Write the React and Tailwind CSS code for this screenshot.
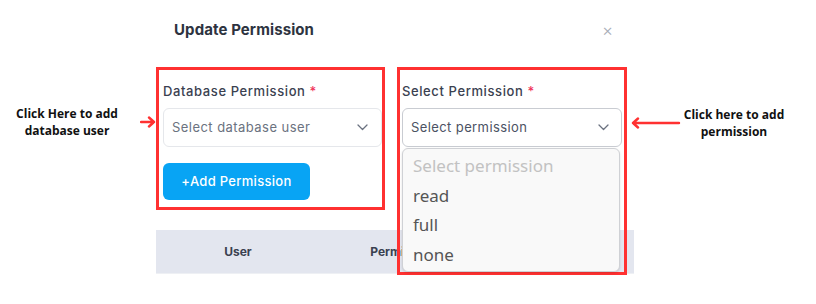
import React from 'react';

const ui = { fontFamily: 'Inter, "Noto Sans", sans-serif' };
const note = { fontFamily: '"Open Sans", "Noto Sans", sans-serif' };
const list = { fontFamily: '"Noto Sans", "DejaVu Sans", sans-serif' };

const Chevron = () => (
  <svg width="11" height="7" viewBox="0 0 11 7" fill="none" stroke="#6b7280" strokeWidth="1.3" strokeLinecap="round" strokeLinejoin="round">
    <path d="M1 1l4.5 4.5L10 1" />
  </svg>
);

const options = ['read', 'full', 'none'];

export default function App() {
  return (
    <div className="w-[816px] h-[304px] bg-white flex overflow-hidden">
      {/* left note */}
      <div className="w-[156px] pt-[105px]">
        <div className="flex items-center">
          <p className="w-[134px] text-center text-[12px] leading-[17px] font-bold text-[#111]" style={note}>
            Click Here to add
            <br />
            database user
          </p>
          <svg width="16" height="12" viewBox="0 0 16 12" className="ml-[6px]">
            <path d="M1 6h13M9 1.5L14 6l-5 4.5" fill="none" stroke="#ff3131" strokeWidth="2.4" strokeLinecap="round" strokeLinejoin="round" />
          </svg>
        </div>
      </div>

      {/* modal */}
      <div className="w-[478px] flex flex-col" style={ui}>
        <div className="flex items-center justify-between pt-[20px] pl-[18px] pr-[21px] h-[40px]">
          <h3 className="text-[15px] font-bold text-[#2d3340] leading-[20px] tracking-[0.1px]">Update Permission</h3>
          <span className="text-[#a8adb7] text-[17px] leading-none font-light">×</span>
        </div>

        <div className="flex items-start gap-[12px] mt-[27px] h-[143px]">
          {/* database user */}
          <div className="w-[229px] border-[3px] border-[#ff3131] pl-[4px] pt-[12px] pb-[7px]">
            <label className="block text-[13px] leading-[18px] font-medium tracking-[0.6px] text-[#3a4150] mb-[8px]">
              Database Permission <span className="text-[#f0355b]">*</span>
            </label>
            <div className="h-[39px] flex items-center justify-between rounded-md border border-[#e5e7eb] pl-[8px] pr-[13px]">
              <span className="text-[13px] tracking-[0.45px] text-[#6b7280]">Select database user</span>
              <Chevron />
            </div>
            <button className="mt-[16px] h-[37px] w-[147px] rounded-md bg-[#08a4f4] text-white text-[13px] font-medium tracking-[0.3px]">
              +Add Permission
            </button>
          </div>

          {/* permission */}
          <div className="relative z-10 w-[230px] border-[3px] border-[#ff3131] px-[2px] pt-[12px] pb-[0px]">
            <label className="block text-[13px] leading-[18px] font-medium tracking-[0.6px] text-[#3a4150] mb-[8px]">
              Select Permission <span className="text-[#f0355b]">*</span>
            </label>
            <div className="h-[39px] flex items-center justify-between rounded-md border border-[#c9ccd2] bg-white pl-[8px] pr-[12px]">
              <span className="text-[13px] tracking-[0.4px] text-[#4b5263]">Select permission</span>
              <Chevron />
            </div>
            <div className="mt-[1px] w-[218px] rounded-md border border-[#cfd1d5] bg-[#f9f9f9] py-[2px] pl-[10px] shadow-sm" style={list}>
              <div className="text-[17px] leading-[29.5px] text-[#c2c2c2]">Select permission</div>
              {options.map((o) => (
                <div key={o} className="text-[17px] leading-[29.5px] text-[#555]">
                  {o}
                </div>
              ))}
            </div>
          </div>
        </div>

        <div className="mt-[20px] h-[44px] bg-[#e3e6ef] border-b border-[#eef0f4] grid grid-cols-[164px_166px_1fr] items-center text-[12px] font-bold text-[#3a4150]">
          <div className="text-center">User</div>
          <div className="text-center">Permission</div>
          <div />
        </div>
      </div>

      {/* right note */}
      <div className="flex-1 pt-[106px]">
        <div className="flex items-center">
          <svg width="50" height="12" viewBox="0 0 50 12" className="-ml-[3px]">
            <path d="M48 6H2M7 1.5L2 6l5 4.5" fill="none" stroke="#ff3131" strokeWidth="2.4" strokeLinecap="round" strokeLinejoin="round" />
          </svg>
          <p className="ml-[2px] w-[102px] whitespace-nowrap text-center text-[12px] leading-[17px] font-bold text-[#111]" style={note}>
            Click here to add
            <br />
            permission
          </p>
        </div>
      </div>
    </div>
  );
}
